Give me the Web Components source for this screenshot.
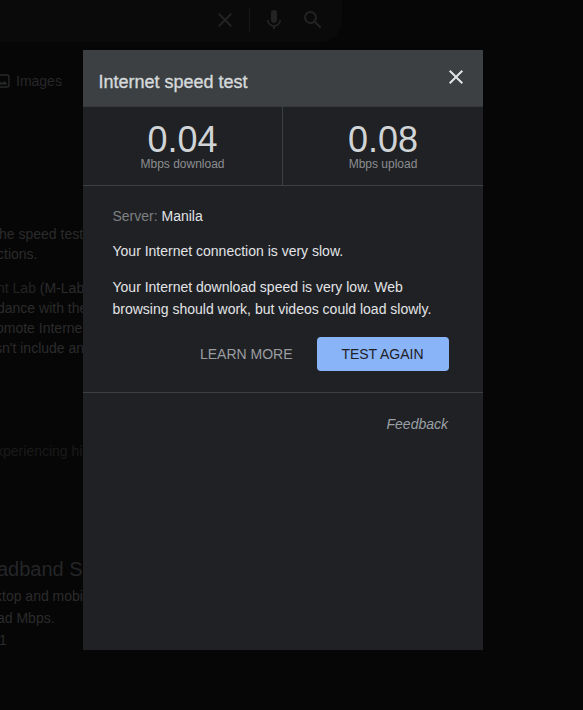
<!DOCTYPE html>
<html lang="en">
<head>
<meta charset="utf-8">
<title>Internet speed test</title>
<style>
  body {
    margin: 0;
    width: 583px;
    height: 710px;
    overflow: hidden;
    position: relative;
    background: #060606;
    color: #e2e4e7;
    font: 14px/20px "Liberation Sans", Arial, sans-serif;
  }
  speed-dialog {
    position: absolute;
    left: 83px;
    top: 50px;
  }
  p {
    margin: 13px 0 0;
  }
  p + p {
    margin-top: 14px;
  }
</style>
</head>
<body>
  <results-page>
    <search-bar></search-bar>
    <image-tab>Images</image-tab>
    <text-lines style="--top: 133px">
      <span style="margin-left: -1px">he speed test</span>
      <span style="margin-left: -3px">ctions.</span>
    </text-lines>
    <text-lines style="--top: 14px">
      <span style="margin-left: -3px"><span style="color: #222324">nt Lab</span> (M-Lab</span>
      <span style="margin-left: -3px">dance with the</span>
      <span style="margin-left: -4px">omote Interne</span>
      <span style="margin-left: -5px">sn't include an</span>
    </text-lines>
    <text-lines style="--top: 83px; --ink: #1b1a1a">
      <span style="margin-left: -4px">xperiencing hi</span>
    </text-lines>
    <text-lines style="--top: 95px; --size: 20px; --line: 26px; --ink: #242528">
      <span style="margin-left: -3px">adband S</span>
    </text-lines>
    <text-lines style="--top: 3px; --line: 22px">
      <span style="margin-left: -5px">ktop and mobi</span>
      <span style="margin-left: -3px">ad Mbps.</span>
      <span style="margin-left: -1px">1</span>
    </text-lines>
  </results-page>

  <speed-dialog>
    <span slot="title">Internet speed test</span>
    <speed-value slot="values" value="0.04">Mbps download</speed-value>
    <speed-value slot="values" value="0.08">Mbps upload</speed-value>
    <server-name>Manila</server-name>
    <p>Your Internet connection is very slow.</p>
    <p>Your Internet download speed is very low. Web browsing should work, but videos could load slowly.</p>
    <action-button slot="actions">LEARN MORE</action-button>
    <action-button slot="actions" primary>TEST AGAIN</action-button>
    <span slot="footer">Feedback</span>
  </speed-dialog>

<script>
class ResultsPage extends HTMLElement {
  connectedCallback() {
    this.attachShadow({ mode: "open" });
    this.shadowRoot.innerHTML = `
      <style>
        :host {
          display: flex;
          flex-direction: column;
          height: 710px;
        }
      </style>
      <slot></slot>
    `;
  }
}

class SearchBar extends HTMLElement {
  connectedCallback() {
    this.attachShadow({ mode: "open" });
    this.shadowRoot.innerHTML = `
      <style>
        :host {
          display: flex;
          box-sizing: border-box;
          width: 342px;
          height: 42px;
          padding: 8px 17px 10px 0;
          justify-content: flex-end;
          align-items: center;
          background: #0a0a0b;
          border-radius: 0 0 21px 0;
          color: #232324;
        }
        svg {
          width: 24px;
          height: 24px;
          fill: currentColor;
        }
        i {
          width: 1px;
          height: 26px;
          margin: 0 12px;
          background: #161617;
        }
        .mic {
          margin-right: 15px;
        }
      </style>
      <svg viewBox="0 0 24 24"><path d="M19 6.41 17.59 5 12 10.59 6.41 5 5 6.41 10.59 12 5 17.59 6.41 19 12 13.41 17.59 19 19 17.59 13.41 12z"/></svg>
      <i></i>
      <svg class="mic" viewBox="0 0 24 24"><path d="M12 15c1.66 0 3-1.31 3-2.97V5.03a3 3 0 0 0-6 0v7c0 1.66 1.34 2.97 3 2.97z"/><path d="M17.3 12.1c0 3-2.54 5.1-5.3 5.1s-5.3-2.1-5.3-5.1H5c0 3.42 2.72 6.23 6 6.72V21h2v-2.18c3.28-.48 6-3.3 6-6.72z"/></svg>
      <svg viewBox="0 0 24 24"><path d="M15.5 14h-.79l-.28-.27A6.47 6.47 0 0 0 16 9.5 6.5 6.5 0 1 0 9.5 16c1.61 0 3.09-.59 4.23-1.57l.27.28v.79l5 4.99L20.49 19l-4.99-5zm-6 0C7.01 14 5 11.99 5 9.5S7.01 5 9.5 5 14 7.01 14 9.5 11.99 14 9.5 14z"/></svg>
    `;
  }
}

class ImageTab extends HTMLElement {
  connectedCallback() {
    this.attachShadow({ mode: "open" });
    this.shadowRoot.innerHTML = `
      <style>
        :host {
          display: flex;
          align-items: center;
          gap: 6px;
          margin: 29px 0 0 -4px;
          height: 20px;
          color: #272829;
        }
        svg {
          width: 14px;
          height: 14px;
          fill: none;
          stroke: currentColor;
          stroke-width: 1.4;
        }
      </style>
      <svg viewBox="0 0 14 14"><rect x="1" y="1" width="12" height="12" rx="2"/><path d="M2.5 10.5h9L8.5 7l-2 2L5 7.5z" fill="currentColor" stroke="none"/></svg>
      <slot></slot>
    `;
  }
}

class TextLines extends HTMLElement {
  connectedCallback() {
    this.attachShadow({ mode: "open" });
    this.shadowRoot.innerHTML = `
      <style>
        :host {
          display: flex;
          flex-direction: column;
          margin-top: var(--top);
          color: var(--ink, #2b2b2c);
          font-size: var(--size, 14px);
          line-height: var(--line, 20px);
          white-space: nowrap;
        }
      </style>
      <slot></slot>
    `;
  }
}

class SpeedDialog extends HTMLElement {
  connectedCallback() {
    this.attachShadow({ mode: "open" });
    this.shadowRoot.innerHTML = `
      <style>
        :host {
          display: flex;
          flex-direction: column;
          width: 400px;
          height: 600px;
          background: #202124;
        }
        header {
          display: flex;
          box-sizing: border-box;
          height: 57px;
          padding: 15px 15px 0 15.4px;
          justify-content: space-between;
          background: #3c4043;
          border-bottom: 1px solid #37393c;
          font-size: 18px;
          line-height: 34px;
          color: #d6d9db;
          -webkit-text-stroke: 0.35px #d6d9db;
        }
        header svg {
          width: 24px;
          height: 24px;
          fill: #e2e4e7;
        }
        .values {
          display: grid;
          grid-template-columns: 200px 200px;
          height: 78px;
          border-bottom: 1px solid #3c4043;
        }
        main {
          display: flex;
          flex-direction: column;
          box-sizing: border-box;
          height: 207px;
          padding: 19px 34.5px 0 29.5px;
          border-bottom: 1px solid #3c4043;
          line-height: 22px;
        }
        .actions {
          display: flex;
          justify-content: flex-end;
          margin-top: 17px;
        }
        footer {
          padding: 21px 35px 0;
          text-align: right;
          font-style: italic;
          color: #9aa0a6;
        }
      </style>
      <header>
        <slot name="title"></slot>
        <svg viewBox="0 0 24 24"><path d="M19 6.41 17.59 5 12 10.59 6.41 5 5 6.41 10.59 12 5 17.59 6.41 19 12 13.41 17.59 19 19 17.59 13.41 12z"/></svg>
      </header>
      <div class="values"><slot name="values"></slot></div>
      <main>
        <slot></slot>
        <div class="actions"><slot name="actions"></slot></div>
      </main>
      <footer><slot name="footer"></slot></footer>
    `;
  }
}

class SpeedValue extends HTMLElement {
  connectedCallback() {
    this.attachShadow({ mode: "open" });
    this.shadowRoot.innerHTML = `
      <style>
        :host {
          display: flex;
          flex-direction: column;
          align-items: center;
          padding-top: 16px;
        }
        :host(:first-of-type) {
          border-right: 1px solid #3c4043;
        }
        b {
          font-weight: normal;
          font-size: 36px;
          line-height: 34px;
          color: #d0d4d7;
        }
        span {
          font-size: 12px;
          line-height: 14px;
          color: #8b8e91;
        }
      </style>
      <b>${this.getAttribute("value")}</b>
      <span><slot></slot></span>
    `;
  }
}

class ServerName extends HTMLElement {
  connectedCallback() {
    this.attachShadow({ mode: "open" });
    this.shadowRoot.innerHTML = `
      <style>
        :host {
          display: block;
        }
        span {
          color: #7d8083;
        }
      </style>
      <span>Server:</span> <slot></slot>
    `;
  }
}

class ActionButton extends HTMLElement {
  connectedCallback() {
    this.attachShadow({ mode: "open" });
    this.shadowRoot.innerHTML = `
      <style>
        :host {
          display: block;
        }
        button {
          display: block;
          box-sizing: border-box;
          height: 34px;
          padding: 0 24px;
          border: 0;
          border-radius: 4px;
          background: none;
          color: #9a9da0;
          font: inherit;
        }
        :host([primary]) button {
          width: 132px;
          background: #8ab4f8;
          color: #202124;
        }
      </style>
      <button><slot></slot></button>
    `;
  }
}

customElements.define("results-page", ResultsPage);
customElements.define("search-bar", SearchBar);
customElements.define("image-tab", ImageTab);
customElements.define("text-lines", TextLines);
customElements.define("speed-dialog", SpeedDialog);
customElements.define("speed-value", SpeedValue);
customElements.define("server-name", ServerName);
customElements.define("action-button", ActionButton);
</script>
</body>
</html>
